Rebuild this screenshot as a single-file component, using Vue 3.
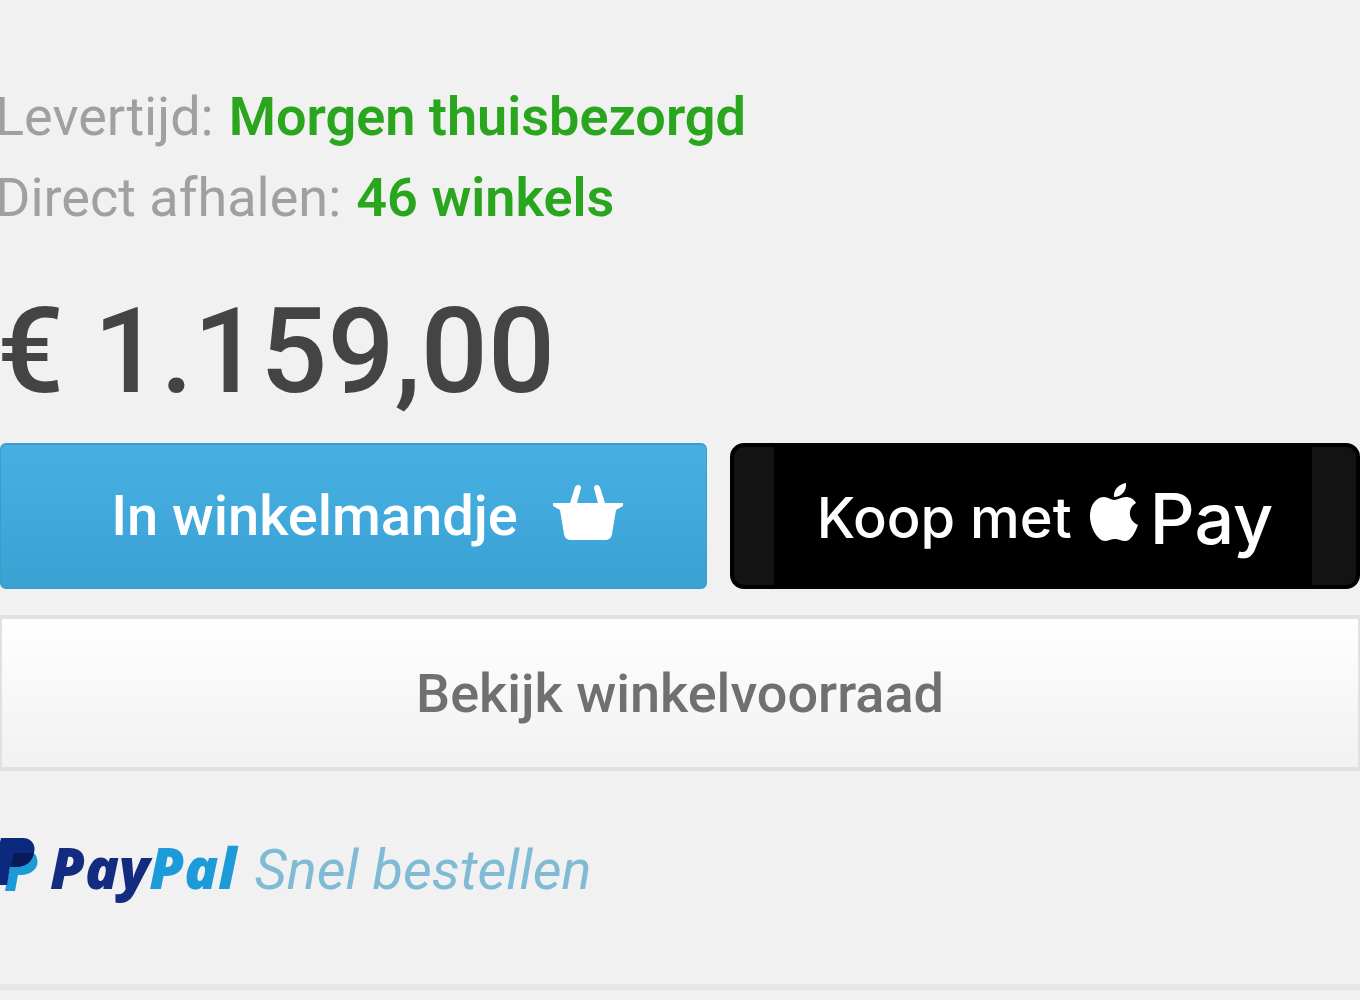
<script setup>
const delivery = [
  { label: 'Levertijd:', value: 'Morgen thuisbezorgd' },
  { label: 'Direct afhalen:', value: '46 winkels' },
]
</script>

<template>
  <main class="buy-box">
    <dl class="delivery">
      <div v-for="row in delivery" :key="row.label" class="delivery-row">
        <dt>{{ row.label }}</dt>
        <dd>{{ row.value }}</dd>
      </div>
    </dl>

    <p class="price">€ 1.159,00</p>

    <div class="actions">
      <button type="button" class="btn cart">
        <span>In winkelmandje</span>
        <svg class="basket" viewBox="0 0 72 58" aria-hidden="true">
          <path d="M1 19h17L23 3q1-2 3-2 3 0 3 3l-4 15h21L42 4q0-3 3-3 2 0 3 2l5 16h18v3l-7 4-4 24q-1 6-7 6H19q-6 0-7-6L8 26l-7-4z" fill="#fff" />
        </svg>
      </button>
      <button type="button" class="btn apple-pay">
        <span>Koop met</span>
        <svg class="apple" viewBox="0 0 48 60" aria-hidden="true">
          <path d="M36 1c1 8-5 14-12 14C23 8 29 2 36 1z" fill="#fff" />
          <path d="M24 18c4 0 7-3 12-3 4 0 8 2 10 6-9 5-8 18 2 22-3 8-7 16-13 16-4 0-6-2-10-2s-7 2-10 2C8 59 0 46 0 34c0-12 7-19 14-19 4 0 7 3 10 3z" fill="#fff" />
        </svg>
        <span class="pay">Pay</span>
      </button>
    </div>

    <button type="button" class="btn stock">Bekijk winkelvoorraad</button>

    <a href="#" class="paypal">
      <svg class="pp" viewBox="0 0 38 54" aria-hidden="true">
        <path d="M13 16h22c6 9 1 20-13 21h-4l-3 16H5z" fill="#1a9bd7" />
        <path d="M1 0h21c11 0 14 8 12 15-2 9-9 14-18 14h-6L7 47H0V4z" fill="#0b2a7d" />
        <path d="M14 15h20c-2 9-9 14-18 14h-5z" fill="#061a5c" />
      </svg>
      <span class="wordmark"><span class="dark">Pay</span><span class="light">Pal</span></span>
      <em>Snel bestellen</em>
    </a>
  </main>
</template>

<style>
body {
  margin: 0;
  background: #f1f1f1;
}
</style>

<style scoped>
.buy-box {
  padding-top: 76px;
  border-bottom: 6px solid #e7e7e7;
  font-family: Roboto, "Liberation Sans", sans-serif;
  font-size: 54px;
}
.delivery {
  margin: 0 0 0 -5px;
}
.delivery-row {
  display: flex;
  gap: 15px;
  line-height: 81px;
}
dt {
  color: #a0a0a0;
  font-weight: 400;
}
dd {
  margin: 0;
  color: #2aa51e;
  font-weight: 600;
}
.price {
  margin: 42px 0 19px -3px;
  color: #444;
  font-size: 118px;
  font-weight: 500;
  line-height: 144px;
}
.actions {
  display: grid;
  grid-template-columns: 707fr 630fr;
  gap: 23px;
}
.btn {
  box-sizing: border-box;
  display: flex;
  align-items: center;
  justify-content: center;
  margin: 0;
  padding: 0;
  border: 0;
  font: inherit;
  cursor: pointer;
}
.cart {
  height: 146px;
  gap: 34px;
  padding-left: 28px;
  border: 2px solid #3a9cca;
  border-width: 2px 1px;
  border-radius: 6px;
  background: linear-gradient(#47b0e3, #3aa1d3);
  color: #fff;
  font-size: 56px;
  font-weight: 500;
}
.basket {
  width: 72px;
  height: 58px;
  margin-bottom: 6px;
}
.apple-pay {
  height: 146px;
  padding-top: 4px;
  border: 4px solid #000;
  border-radius: 14px;
  background: linear-gradient(to right, #131313 40px, #000 40px, #000 calc(100% - 44px), #131313 calc(100% - 44px));
  color: #fff;
  font-family: Inter, "Liberation Sans", sans-serif;
  font-size: 56px;
  font-weight: 500;
}
.apple {
  width: 48px;
  height: 60px;
  margin: 0 12px 12px 18px;
}
.pay {
  font-size: 70px;
}
.stock {
  width: 100%;
  height: 156px;
  margin-top: 26px;
  border: solid #e1e1e1;
  border-width: 4px 2px;
  background: linear-gradient(#fff, #f1f1f1);
  color: #707070;
  font-weight: 500;
}
.paypal {
  display: flex;
  align-items: center;
  height: 76px;
  margin: 61px 0 76px;
  text-decoration: none;
}
.pp {
  width: 38px;
  height: 54px;
  margin: 0 12px 10px 0;
}
.wordmark {
  margin-bottom: 6px;
  font-family: "Open Sans", "Liberation Sans", sans-serif;
  font-size: 56px;
  font-style: italic;
  font-weight: 800;
}
.dark {
  color: #142c80;
}
.light {
  color: #1c9bd8;
}
em {
  margin-left: 18px;
  color: #80bbd6;
  font-size: 56px;
  font-weight: 400;
}
</style>
